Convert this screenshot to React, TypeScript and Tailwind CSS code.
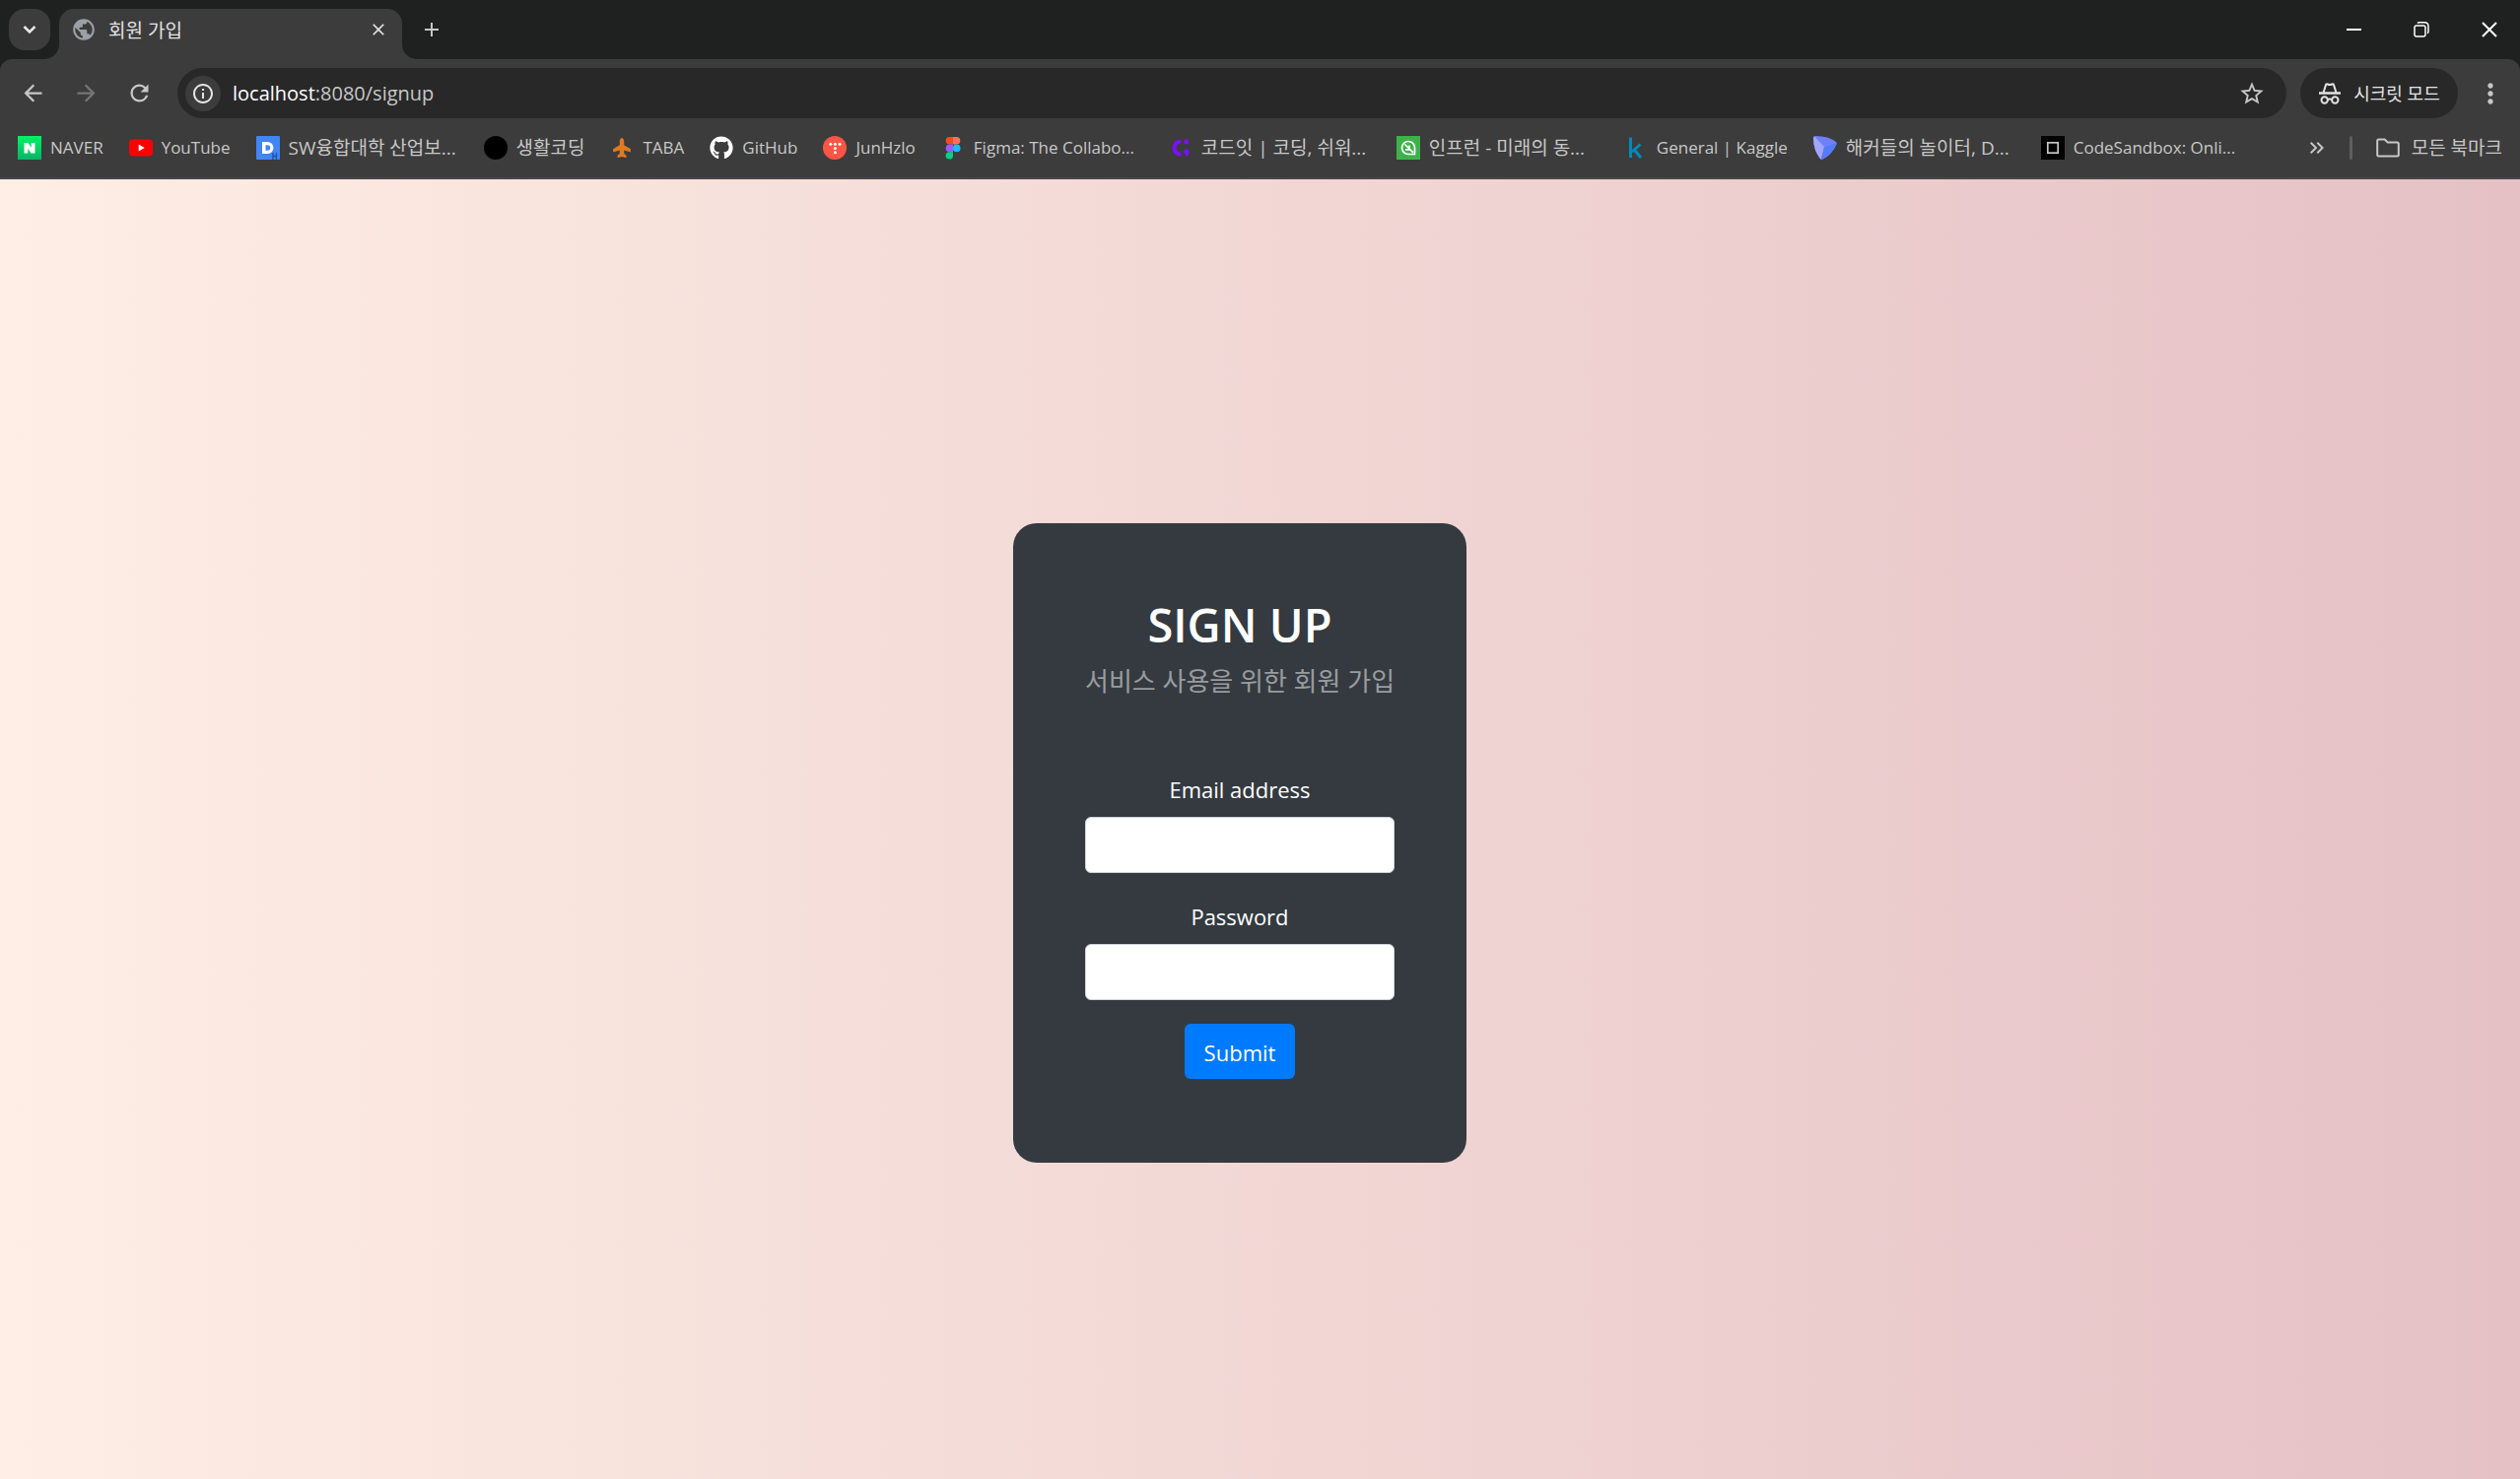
import type { ReactNode } from "react"
import { FaGithub, FaPlane } from "react-icons/fa"
import {
  MdAdd,
  MdArrowBack,
  MdArrowForward,
  MdClose,
  MdInfoOutline,
  MdKeyboardDoubleArrowRight,
  MdMoreVert,
  MdPublic,
  MdRefresh,
  MdStarBorder,
} from "react-icons/md"

type Bookmark = {
  label: string
  icon: ReactNode
  korean?: boolean
  // long titles are cut to the same width
  long?: boolean
}

const bookmarks: Bookmark[] = [
  { label: "NAVER", icon: <NaverIcon /> },
  { label: "YouTube", icon: <YoutubeIcon /> },
  { label: "SW융합대학 산업보...", icon: <DankookIcon />, korean: true, long: true },
  { label: "생활코딩", icon: <div className="size-6 rounded-full bg-black" />, korean: true },
  { label: "TABA", icon: <PlaneIcon /> },
  { label: "GitHub", icon: <FaGithub className="size-6 text-white" /> },
  { label: "JunHzlo", icon: <TistoryIcon /> },
  { label: "Figma: The Collabo...", icon: <FigmaIcon />, long: true },
  { label: "코드잇 | 코딩, 쉬워...", icon: <CodeitIcon />, korean: true, long: true },
  { label: "인프런 - 미래의 동...", icon: <InflearnIcon />, korean: true, long: true },
  { label: "General | Kaggle", icon: <KaggleIcon /> },
  { label: "해커들의 놀이터, D...", icon: <DreamhackIcon />, korean: true, long: true },
  { label: "CodeSandbox: Onli...", icon: <SandboxIcon />, long: true },
]

function NaverIcon() {
  return (
    <svg viewBox="0 0 24 24" className="size-6">
      <defs>
        <linearGradient id="naver" x1="0" y1="0" x2="0" y2="1">
          <stop offset="0" stopColor="#00f264" />
          <stop offset="1" stopColor="#04b565" />
        </linearGradient>
      </defs>
      <rect width="24" height="24" fill="url(#naver)" />
      <path d="M6.5 7h4l3.2 4.7V7h3.8v10.500h-4l-3.200-4.800v4.800H6.500z" fill="#fff" />
    </svg>
  )
}

function YoutubeIcon() {
  return (
    <svg viewBox="0 0 24 24" className="size-6">
      <rect y="3.500" width="24" height="17" rx="4" fill="#f00" />
      <path d="M9.700 8.500v7l6-3.500z" fill="#fff" />
    </svg>
  )
}

function DankookIcon() {
  return (
    <svg viewBox="0 0 24 24" className="size-6">
      <rect width="24" height="24" rx="1" fill="#4285f4" />
      <path d="M6 6h5.500a6 6 0 0 1 0 12H6zm3.500 3.200v5.600h2a2.800 2.800 0 0 0 0-5.600z" fill="#fff" fillRule="evenodd" />
      <path d="M17 17v7M20.500 17v7M17 20.500h3.500" stroke="#1f4f9e" strokeWidth="1.300" />
    </svg>
  )
}

function PlaneIcon() {
  return (
    <span className="flex size-6 items-center justify-center">
      <FaPlane className="size-5 -rotate-90 text-[#e07b20]" />
    </span>
  )
}

function TistoryIcon() {
  return (
    <svg viewBox="0 0 24 24" className="size-6">
      <circle cx="12" cy="12" r="12" fill="#ff5544" />
      <g fill="#fff">
        <circle cx="7.800" cy="8.300" r="1.500" />
        <circle cx="12.400" cy="8.300" r="1.500" />
        <circle cx="17" cy="8.300" r="1.500" />
        <circle cx="12.400" cy="12.600" r="1.500" />
        <circle cx="12.400" cy="16.800" r="1.500" />
      </g>
    </svg>
  )
}

function FigmaIcon() {
  return (
    <svg viewBox="0 0 24 24" className="size-6">
      <path d="M12 1H8.500a3.800 3.800 0 0 0 0 7.600H12z" fill="#f24e1e" />
      <path d="M12 1h3.500a3.800 3.800 0 0 1 0 7.600H12z" fill="#ff7262" />
      <path d="M12 8.600H8.500a3.800 3.800 0 0 0 0 7.600H12z" fill="#a259ff" />
      <circle cx="15.700" cy="12.400" r="3.800" fill="#1abcfe" />
      <path d="M12 16.200H8.500a3.700 3.700 0 1 0 3.500 3.700z" fill="#0acf83" />
    </svg>
  )
}

function CodeitIcon() {
  return (
    <svg viewBox="0 0 24 24" className="size-6">
      <path d="M12.500 5.500Q5.500 5.800 5.500 12t7 6.700" fill="none" stroke="#7b0fff" strokeWidth="4" />
      <circle cx="17.800" cy="6" r="2.500" fill="#7b0fff" />
      <path d="M20.500 15.500c0 3.500-1.300 5.500-3.500 6v-3a2.700 2.700 0 1 1 3.500-3z" fill="#7b0fff" />
    </svg>
  )
}

function InflearnIcon() {
  return (
    <svg viewBox="0 0 24 24" className="size-6">
      <rect width="24" height="24" fill="#3eb24a" />
      <path
        d="M18.500 18.500H12a6.500 6.500 0 1 1 6.500-6.500zM8.500 8.500l5.500 5.500M13 9.500V13M9 13.800h5l3 3"
        fill="none"
        stroke="#fff"
        strokeWidth="1.700"
        strokeLinejoin="round"
      />
    </svg>
  )
}

function KaggleIcon() {
  return (
    <svg viewBox="0 0 24 24" className="size-6">
      <path d="M6.500 1.500v20.500M16.500 8.500l-8.500 7.500M10 13.500l7 8.500" fill="none" stroke="#008abc" strokeWidth="3" />
    </svg>
  )
}

function DreamhackIcon() {
  return (
    <svg viewBox="0 0 24 24" className="size-6">
      <path d="M0 2q0-2 2-2Q16 0 23 6q1 1 .500 2.500Q19 19 9 24q-1.500 0-2-1Q0 14 0 2z" fill="#6f80ff" />
      <path d="M1 .500L11 11 7.500 24Q0 15 0 2z" fill="#a5a5ff" />
      <path d="M11 11L24 7Q19 19 8 24z" fill="#567bfa" />
    </svg>
  )
}

function SandboxIcon() {
  return (
    <svg viewBox="0 0 24 24" className="size-6">
      <rect width="24" height="24" fill="#000" />
      <rect x="6.800" y="6.800" width="10.400" height="10.400" fill="none" stroke="#c8c8c8" strokeWidth="1.700" />
    </svg>
  )
}

function IncognitoIcon() {
  return (
    <svg viewBox="0 0 24 24" className="size-6" fill="none" stroke="currentColor" strokeWidth="2">
      <path d="M1 11.500h22" strokeWidth="2.500" />
      <path d="M5.500 11L8 3.200q.500-1.200 1.800-.700 2.200 1 4.400 0 1.300-.500 1.800.700L18.500 11" />
      <circle cx="6.700" cy="18.500" r="3.200" />
      <circle cx="17.300" cy="18.500" r="3.200" />
      <path d="M10 18q2-1.200 4 0" />
    </svg>
  )
}

function FolderIcon() {
  return (
    <svg viewBox="0 0 24 24" className="size-6" fill="none" stroke="currentColor" strokeWidth="2">
      <path d="M1.200 19V5q0-1.500 1.500-1.500h6l3 3h9.600q1.500 0 1.500 1.500v11q0 1.500-1.500 1.500H2.700q-1.500 0-1.500-1.500z" />
    </svg>
  )
}

// Outward curve at the foot of the active tab
function TabFoot({ className }: { className: string }) {
  return (
    <svg viewBox="0 0 15 15" className={`absolute bottom-0 size-[15px] text-[#3c3c3c] ${className}`}>
      <path d="M15 0v15H0A15 15 0 0 0 15 0z" fill="currentColor" />
    </svg>
  )
}

function TabStrip() {
  return (
    <div className="flex h-[60px] items-start pt-[9px] pl-[9px]">
      <button className="flex size-[42px] items-center justify-center rounded-2xl bg-[#3c3c3c] text-[#e8e8e8]" aria-label="탭 검색">
        <svg viewBox="0 0 14 10" className="h-[10px] w-[14px]" fill="none" stroke="currentColor" strokeWidth="2.500">
          <path d="M1.500 2L7 7.500 12.500 2" />
        </svg>
      </button>
      <div className="relative ml-[9px] flex h-[51px] w-[348px] items-start rounded-t-[15px] bg-[#3c3c3c] px-3">
        <TabFoot className="-left-[15px]" />
        <TabFoot className="-right-[15px] -scale-x-100" />
        <div className="flex h-[42px] flex-1 items-center gap-3">
          <MdPublic className="size-[26px] text-[#9aa0a6]" />
          <span className="flex-1 pt-[2px] text-[19px] leading-6 text-[#e3e3e3]">회원 가입</span>
          <button className="flex size-6 items-center justify-center text-[#e3e3e3]" aria-label="탭 닫기">
            <MdClose className="size-5" stroke="currentColor" />
          </button>
        </div>
      </div>
      <button className="ml-[18px] flex h-[42px] w-6 items-center justify-center text-[#c7c7c7]" aria-label="새 탭">
        <MdAdd className="size-[26px]" />
      </button>
      <div className="ml-auto flex h-[42px] gap-[7px] text-white">
        <button className="flex w-[62px] items-center justify-center" aria-label="최소화">
          <span className="h-[2px] w-[15px] bg-white" />
        </button>
        <button className="flex w-[62px] items-center justify-center" aria-label="이전 크기로 복원">
          <svg viewBox="0 0 16 16" className="size-4" fill="none" stroke="currentColor" strokeWidth="1.500">
            <rect x="1" y="4" width="11" height="11" rx="2" />
            <path d="M4 1.500q.500-.700 2-.700h5q4 0 4 4v5q0 1.500-1 2" />
          </svg>
        </button>
        <button className="flex w-[62px] items-center justify-center" aria-label="닫기">
          <svg viewBox="0 0 16 16" className="size-4" stroke="currentColor" strokeWidth="2">
            <path d="M1 1l14 14M15 1L1 15" />
          </svg>
        </button>
      </div>
    </div>
  )
}

function Toolbar() {
  return (
    <div className="flex h-[69px] items-center pr-[14px] pl-5 text-[#c7c7c7]">
      <div className="flex gap-[27px]">
        <button aria-label="뒤로">
          <MdArrowBack className="size-[27px]" />
        </button>
        <button aria-label="앞으로" className="text-[#757575]">
          <MdArrowForward className="size-[27px]" />
        </button>
        <button aria-label="새로고침">
          <MdRefresh className="size-[27px]" />
        </button>
      </div>
      <div className="ml-[25px] flex h-[51px] flex-1 items-center rounded-full bg-[#282828] pr-[21px] pl-2">
        <button className="flex size-9 items-center justify-center rounded-full bg-[#3c3c3c] text-[#e3e3e3]" aria-label="사이트 정보">
          <MdInfoOutline className="size-6" />
        </button>
        <div className="relative ml-3 flex-1 text-[20px] leading-[30px]">
          <input className="w-full bg-transparent text-transparent outline-none" aria-label="주소창" />
          {/* host is brighter than the rest of the address */}
          <span className="pointer-events-none absolute inset-y-0 left-0">
            <span className="text-white">localhost</span>:8080/signup
          </span>
        </div>
        <button aria-label="북마크에 추가">
          <MdStarBorder className="size-7" />
        </button>
      </div>
      <button className="ml-[14px] flex h-[51px] w-40 items-center justify-center gap-3 rounded-full bg-[#282828] text-lg text-[#e3e3e3]">
        <IncognitoIcon />
        시크릿 모드
      </button>
      <button className="ml-[17px]" aria-label="메뉴">
        <MdMoreVert className="size-8" />
      </button>
    </div>
  )
}

function BookmarkBar() {
  return (
    <nav className="flex h-[53px] items-center border-b-2 border-[#484848] px-[18px] pb-[10px] text-[#c7c7c7]">
      {bookmarks.map((item) => (
        <a
          key={item.label}
          href="#"
          className={`flex shrink-0 items-center gap-[9px] leading-6 whitespace-nowrap ${item.korean ? "text-[19px]" : "text-[17px]"} ${item.long ? "w-[231px]" : "pr-[26px]"}`}
        >
          <span className="shrink-0">{item.icon}</span>
          {item.label}
        </a>
      ))}
      <button className="ml-auto" aria-label="북마크 더보기">
        <MdKeyboardDoubleArrowRight className="size-6" />
      </button>
      <span className="mr-6 ml-[21px] h-6 w-[3px] rounded-full bg-[#5f5f5f]" />
      <button className="flex items-center gap-3 text-[19px] leading-6">
        <FolderIcon />
        모든 북마크
      </button>
    </nav>
  )
}

function Field({ id, type, label }: { id: string; type: string; label: string }) {
  return (
    <div className="mb-6 flex flex-col pt-[2px]">
      <label htmlFor={id} className="mb-[10px] text-[22px] leading-9">
        {label}
      </label>
      <input
        id={id}
        type={type}
        className="h-[57px] w-full rounded-md border border-[#ced4da] bg-white px-4 text-[22px] text-[#495057]"
      />
    </div>
  )
}

function SignupCard() {
  return (
    <section className="w-[460px] rounded-3xl bg-[#343a40] px-[73px] pt-[74px] pb-[85px] text-center text-white">
      <h2 className="mb-[10px] text-[47px] leading-[58px] font-semibold">SIGN UP</h2>
      <p className="mb-[72px] text-[26px] leading-9 whitespace-nowrap text-white/50">서비스 사용을 위한 회원 가입</p>
      <form onSubmit={(e) => e.preventDefault()}>
        <Field id="email" type="email" label="Email address" />
        <Field id="password" type="password" label="Password" />
        <button type="submit" className="mx-auto block h-14 rounded-md bg-[#007bff] px-5 pt-[2px] text-[22px] leading-9">
          Submit
        </button>
      </form>
    </section>
  )
}

export default function App() {
  return (
    <div className="flex min-h-screen flex-col bg-[#1f2020] font-['Open_Sans','Noto_Sans_CJK_KR',sans-serif]">
      <TabStrip />
      <div className="rounded-t-xl bg-[#3c3c3c]">
        <Toolbar />
        <BookmarkBar />
      </div>
      <main className="flex flex-1 items-center justify-center bg-linear-to-r from-[#feeee5] to-[#e5c1c5] pt-7 pr-[41px]">
        <SignupCard />
      </main>
    </div>
  )
}
